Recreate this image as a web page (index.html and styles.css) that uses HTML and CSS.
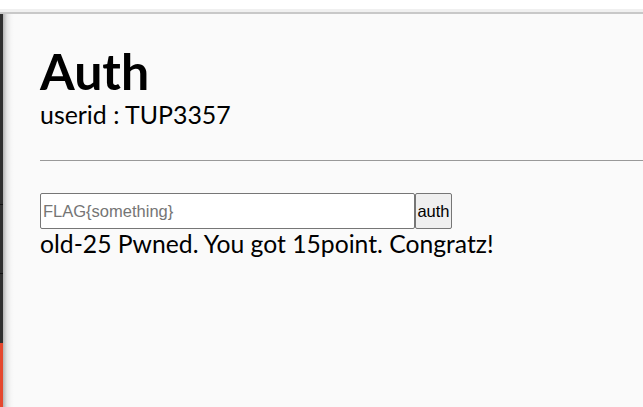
FILE: index.html
```html
<!DOCTYPE html>
<html>
<head>
<meta charset="utf-8">
<link rel="stylesheet" href="styles.css">
</head>
<body>
<div class="topbar"></div>
<div class="frame">
  <div class="rail">
    <div class="seg seg1"></div>
    <div class="seg seg2"></div>
    <div class="seg seg3"></div>
    <div class="seg seg4"></div>
  </div>
  <main class="page">
    <h1 class="title">Auth</h1>
    <div class="userid">userid : TUP3357</div>
    <hr class="rule">
    <form class="authform">
      <input class="flag" type="text" placeholder="FLAG{something}">
      <button class="btn" type="button">auth</button>
    </form>
    <div class="msg">old-25 Pwned. You got 15point. Congratz!</div>
  </main>
</div>
</body>
</html>
```
FILE: styles.css
```css
html, body {
  margin: 0;
  padding: 0;
  height: 100%;
  overflow: hidden;
}
body {
  background: #fafafa;
  font-family: Lato, "Noto Sans", sans-serif;
  color: #000;
  display: flex;
  flex-direction: column;
}
.topbar {
  height: 12px;
  background: linear-gradient(to bottom, #ffffff 0, #ffffff 9px, #f0f0f0 9px, #f0f0f0 12px);
  border-bottom: 2px solid #c8c8c8;
  flex: none;
}
.frame {
  flex: 1;
  display: flex;
  min-height: 0;
}
.rail {
  width: 3px;
  display: flex;
  flex-direction: column;
  flex: none;
}
.seg { background: #2f2f2f; }
.seg1 { height: 190px; border-bottom: 1px solid #111; }
.seg2 { height: 68px; border-bottom: 1px solid #111; }
.seg3 { height: 69px; }
.seg4 { flex: 1; background: #e5472e; }
.page {
  flex: 1;
  padding: 27px 0 0 37px;
  background: linear-gradient(to right, #b4b4b4 0, #e6e6e6 4px, #f6f6f6 8px, #fafafa 11px);
}
.title {
  margin: 0;
  font-size: 50px;
  font-weight: 700;
  line-height: 60px;
}
.userid {
  font-size: 24.9px;
  line-height: 26px;
}
.rule {
  margin: 33px 0 0 0;
  border: 0;
  border-top: 1px solid #999;
  height: 0;
}
.authform {
  margin: 32px 0 0 0;
  display: flex;
  align-items: stretch;
}
.flag {
  width: 375px;
  height: 36px;
  box-sizing: border-box;
  border: 1px solid #767676;
  border-radius: 2px;
  padding: 0 2px;
  font-family: "Liberation Sans", Arial, sans-serif;
  font-size: 16.5px;
  background: #fff;
  margin: 0;
}
.flag::placeholder { color: #757575; }
.btn {
  width: 37px;
  height: 36px;
  box-sizing: border-box;
  border: 1px solid #767676;
  border-radius: 2px;
  background: #efefef;
  font-family: "Liberation Sans", Arial, sans-serif;
  font-size: 16.5px;
  padding: 0;
  margin: 0;
  color: #000;
}
.msg {
  font-size: 24.7px;
  line-height: 30px;
}
```
